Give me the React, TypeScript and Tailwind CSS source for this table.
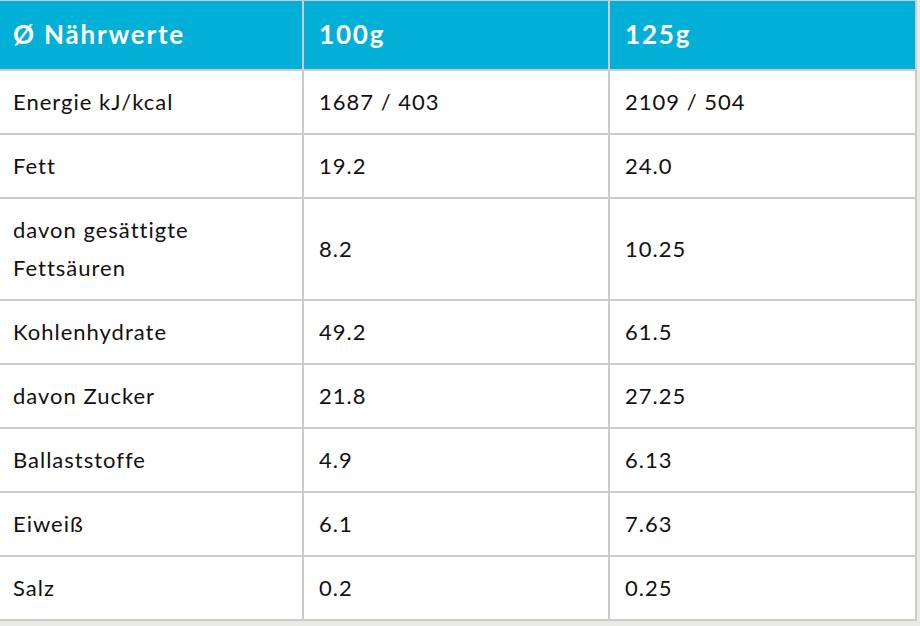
const rows: [string, string, string][] = [
  ["Energie kJ/kcal", "1687 / 403", "2109 / 504"],
  ["Fett", "19.2", "24.0"],
  ["davon gesättigte Fettsäuren", "8.2", "10.25"],
  ["Kohlenhydrate", "49.2", "61.5"],
  ["davon Zucker", "21.8", "27.25"],
  ["Ballaststoffe", "4.9", "6.13"],
  ["Eiweiß", "6.1", "7.63"],
  ["Salz", "0.2", "0.25"],
];

export default function App() {
  return (
    <div className="min-h-[626px] w-[920px] bg-[#ebebe6] font-['Lato',sans-serif]">
      <table className="w-[916px] table-fixed border-collapse bg-white border-t border-r-2 border-b-2 border-[#cccccc]">
        <colgroup>
          <col className="w-[303px]" />
          <col className="w-[306px]" />
          <col className="w-[307px]" />
        </colgroup>
        <thead>
          <tr className="h-[69px] bg-[#02afd6] text-white">
            {["Ø Nährwerte", "100g", "125g"].map((h, i) => (
              <th
                key={i}
                className={`text-left text-[26px] font-bold tracking-[1.8px] ${i > 0 ? "border-l-2 border-[#cccccc] px-[15px]" : "pl-[13px]"}`}
              >
                {h}
              </th>
            ))}
          </tr>
        </thead>
        <tbody>
          {rows.map((r, i) => (
            <tr key={i} className="border-t-2 border-[#cccccc]">
              {r.map((c, j) => (
                <td
                  key={j}
                  className={`py-[12px] align-middle text-[22px] leading-[38px] tracking-[1px] text-[#111111] ${j > 0 ? "border-l-2 border-[#cccccc] px-[15px]" : "pl-[13px] pr-[15px]"} ${j === 0 && i === 2 ? "pr-[90px]" : ""}`}
                >
                  {c}
                </td>
              ))}
            </tr>
          ))}
        </tbody>
      </table>
    </div>
  );
}
